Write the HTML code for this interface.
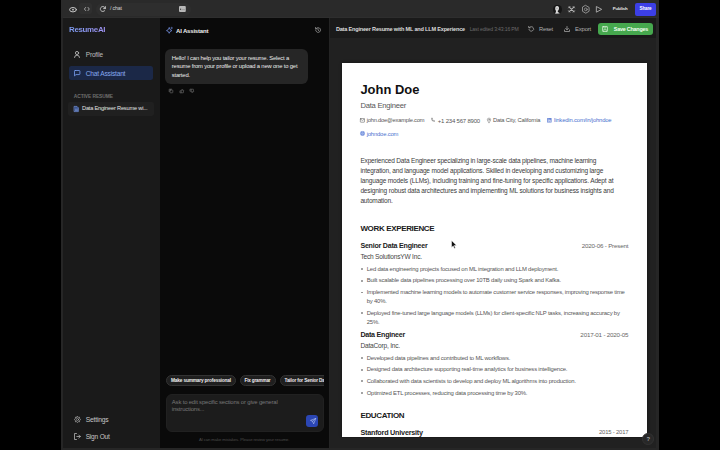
<!DOCTYPE html>
<html><head><meta charset="utf-8">
<style>
*{margin:0;padding:0;box-sizing:border-box}
html,body{width:720px;height:450px;overflow:hidden;background:#000;font-family:"Liberation Sans",sans-serif}
.b{position:absolute}
.t{position:absolute;white-space:nowrap;line-height:1}
svg{position:absolute;overflow:visible;fill:none;stroke-linecap:round;stroke-linejoin:round}
</style></head><body>
<!-- window frame -->
<div class="b" style="left:60.7px;top:0;width:598.1px;height:450px;background:#262626"></div>
<!-- top bar -->
<div class="b" style="left:60.7px;top:0;width:598.1px;height:18.2px;background:#2a2a2a"></div>
<div class="b" style="left:62.5px;top:17.2px;width:594px;height:1px;background:#2e2e2e"></div>
<!-- sidebar -->
<div class="b" style="left:63px;top:18.2px;width:97px;height:429.8px;background:#1a1a1a"></div>
<!-- chat -->
<div class="b" style="left:160px;top:18.2px;width:168.5px;height:429.8px;background:#0a0a0a"></div>
<div class="b" style="left:328.5px;top:18.2px;width:1.5px;height:429.8px;background:#242424"></div>
<!-- resume -->
<div class="b" style="left:330px;top:18.2px;width:326.2px;height:429.8px;background:#212121"></div>
<div class="b" style="left:330px;top:18.2px;width:326.2px;height:19.4px;background:#1a1a1a"></div>
<!-- paper -->
<div class="b" style="left:341.7px;top:63.3px;width:305px;height:374.2px;background:#fff;box-shadow:0 0 3px rgba(0,0,0,.45)"></div>

<!-- ===== TOP BAR ===== -->
<svg style="left:68.7px;top:6.6px" width="8" height="5.4" viewBox="0 0 8 5.4"><ellipse cx="4" cy="2.7" rx="3.4" ry="2.2" stroke="#c4c4c4" stroke-width="1"></ellipse><circle cx="4" cy="2.7" r="0.9" fill="#c4c4c4"></circle></svg>
<div class="b" style="left:79.3px;top:3.1px;width:12.5px;height:11.3px;background:#2f2f2f;border-radius:2px"></div>
<svg style="left:83.6px;top:6.9px" width="5.7" height="4" viewBox="0 0 5.7 4"><path d="M1.7 0.4 L0.4 2 L1.7 3.6 M4 0.4 L5.3 2 L4 3.6" stroke="#b4b4b4" stroke-width="0.85"></path></svg>
<div class="b" style="left:96px;top:2.5px;width:95px;height:13.5px;background:#2e2e2e;border-radius:7px"></div>
<svg style="left:100px;top:6px" width="6" height="6" viewBox="0 0 6 6"><path d="M5.3 2.5 A2.5 2.5 0 1 0 4.8 4.6" stroke="#c8c8c8" stroke-width="0.9"></path><path d="M5.4 0.6 L5.4 2.6 L3.6 2.6" stroke="#c8c8c8" stroke-width="0.9"></path></svg>
<div class="t" style="left: 110px; top: 6.32px; font-size: 5.14px; color: rgb(216, 216, 216); letter-spacing: -0.135px;">/ chat</div>
<svg style="left:179.2px;top:6px" width="6.8" height="6" viewBox="0 0 6.8 6"><rect x="0" y="0" width="6.8" height="6" rx="1" fill="#b8b8b8"></rect><rect x="1.2" y="2.6" width="0.9" height="1.4" fill="#333"></rect><path d="M3 3.6 H5.6" stroke="#8a8a8a" stroke-width="0.6"></path></svg>

<!-- avatar -->
<div class="b" style="left:553.4px;top:4.6px;width:8.4px;height:9.6px;border-radius:50%;background:#151515"></div>
<svg style="left:553.4px;top:4.6px" width="8.4" height="9.6" viewBox="0 0 8.4 9.6"><path d="M3 1.3 Q5.2 0.6 5.9 2.3 Q6.3 3.6 5.7 4.8 Q5.3 5.8 4.6 6 L5.2 7.2 Q6.4 7.6 6.8 8.6 L2.2 8.8 Q2.2 7.6 3 7 L2.8 5.6 Q2 4.6 2.2 3.2 Q2.3 1.8 3 1.3Z" fill="#d8d8d8"></path><path d="M3.4 3.2 Q4.2 2.8 5 3.4" stroke="#777" stroke-width="0.4"></path></svg>
<svg style="left:568.4px;top:5.8px" width="7.1" height="6.7" viewBox="0 0 7.1 6.7"><path d="M1 0.9 L6.1 5.8 M6.1 0.9 L1 5.8" stroke="#b0b0b0" stroke-width="1.1"></path><path d="M0.6 1.9 L1.9 0.6 M5.2 0.6 L6.5 1.9 M0.6 4.8 L1.9 6.1 M5.2 6.1 L6.5 4.8" stroke="#b0b0b0" stroke-width="0.9"></path></svg>
<svg style="left:581.7px;top:4.6px" width="7.6" height="8.7" viewBox="0 0 7.6 8.7"><path d="M3.8 0.5 L7.1 2.4 L7.1 6.3 L3.8 8.2 L0.5 6.3 L0.5 2.4Z" stroke="#a0a0a0" stroke-width="0.85"></path><circle cx="3.8" cy="4.35" r="1.4" stroke="#a0a0a0" stroke-width="0.75"></circle></svg>
<svg style="left:596.3px;top:5.8px" width="6.3" height="6.7" viewBox="0 0 6.3 6.7"><path d="M0.7 0.7 L5.7 3.35 L0.7 6Z" stroke="#b0b0b0" stroke-width="0.9"></path></svg>
<div class="t" style="left: 612.8px; top: 6.56px; font-size: 4.35px; font-weight: 700; color: rgb(230, 230, 230); letter-spacing: -0.145px;">Publish</div>
<div class="b" style="left:634.6px;top:2.8px;width:21.5px;height:12.9px;background:#3c3fe6;border-radius:2px"></div>
<div class="t" style="left: 639.5px; top: 6.55px; font-size: 4.6px; font-weight: 700; color: rgb(255, 255, 255); letter-spacing: -0.166px;">Share</div>

<!-- ===== SIDEBAR ===== -->
<div class="t" style="left: 69px; top: 26.26px; font-size: 7.94px; font-weight: 700; background: linear-gradient(90deg, rgb(126, 158, 244), rgb(161, 147, 244)) text; color: transparent; letter-spacing: -0.324px;">ResumeAI</div>
<svg style="left:74px;top:51.3px" width="6" height="7" viewBox="0 0 6 7"><circle cx="3" cy="2" r="1.6" stroke="#c4c4c4" stroke-width="0.8"></circle><path d="M0.5 6.5 Q0.5 4.2 3 4.2 Q5.5 4.2 5.5 6.5" stroke="#c4c4c4" stroke-width="0.8"></path></svg>
<div class="t" style="left: 85.8px; top: 52.14px; font-size: 6.49px; color: rgb(189, 189, 189); letter-spacing: -0.172px;">Profile</div>
<div class="b" style="left:69.3px;top:65.6px;width:83.7px;height:14.6px;background:#1b2847;border-radius:2.5px"></div>
<svg style="left:73.8px;top:69.8px" width="6.4" height="6.4" viewBox="0 0 6.4 6.4"><path d="M1.2 0.5 H5.2 Q5.9 0.5 5.9 1.2 V3.9 Q5.9 4.6 5.2 4.6 H2 L0.5 5.9 V1.2 Q0.5 0.5 1.2 0.5Z" stroke="#7aa0f2" stroke-width="0.8"></path></svg>
<div class="t" style="left: 85.8px; top: 70.83px; font-size: 6.61px; color: rgb(134, 168, 240); letter-spacing: -0.2px;">Chat Assistant</div>
<div class="t" style="left: 73.8px; top: 94.53px; font-size: 4.92px; font-weight: 700; color: rgb(111, 111, 111); letter-spacing: -0.098px;">ACTIVE RESUME</div>
<div class="b" style="left:68px;top:102px;width:85.5px;height:13.5px;background:#202020;border-radius:2.5px"></div>
<svg style="left:74px;top:105.9px" width="4.8" height="6" viewBox="0 0 4.8 6"><path d="M0.4 0.4 H3 L4.4 1.8 V5.6 H0.4Z" fill="#3b5590" stroke="#7c9ce8" stroke-width="0.6"></path><path d="M1.3 3.2 H3.4 M1.3 4.4 H3.4" stroke="#9fb6ee" stroke-width="0.45"></path></svg>
<div class="t" style="left: 82px; top: 106.39px; font-size: 5.63px; color: rgb(228, 228, 228); letter-spacing: -0.18px;">Data Engineer Resume wi...</div>

<svg style="left:73.7px;top:416.2px" width="7" height="7" viewBox="0 0 7 7"><path d="M3.5 0.5 L4.3 1.3 L5.5 1.2 L5.6 2.4 L6.5 3.5 L5.6 4.6 L5.5 5.8 L4.3 5.7 L3.5 6.5 L2.7 5.7 L1.5 5.8 L1.4 4.6 L0.5 3.5 L1.4 2.4 L1.5 1.2 L2.7 1.3Z" stroke="#a8a8a8" stroke-width="0.75"></path><circle cx="3.5" cy="3.5" r="1.1" stroke="#a8a8a8" stroke-width="0.7"></circle></svg>
<div class="t" style="left: 85.7px; top: 416.83px; font-size: 6.74px; color: rgb(198, 198, 198); letter-spacing: -0.197px;">Settings</div>
<svg style="left:73.5px;top:432.8px" width="7" height="7" viewBox="0 0 7 7"><path d="M2.5 0.5 H0.5 V6.5 H2.5 M2.8 3.5 H6.3 M4.8 2 L6.3 3.5 L4.8 5" stroke="#b4b4b4" stroke-width="0.8"></path></svg>
<div class="t" style="left: 85.7px; top: 433.53px; font-size: 6.6px; color: rgb(198, 198, 198); letter-spacing: -0.213px;">Sign Out</div>

<!-- ===== CHAT ===== -->
<svg style="left:165.6px;top:26.8px" width="7" height="6.6" viewBox="0 0 7 6.6"><path d="M3.2 0.9 Q3.6 3 5.9 3.6 Q3.6 4.1 3.2 6.3 Q2.8 4.1 0.5 3.6 Q2.8 3 3.2 0.9Z" stroke="#7a98ee" stroke-width="0.75"></path><path d="M5.7 0.2 V1.8 M4.9 1 H6.5" stroke="#7a98ee" stroke-width="0.5"></path></svg>
<div class="t" style="left: 176px; top: 27.87px; font-size: 6.03px; font-weight: 700; color: rgb(240, 240, 240); letter-spacing: -0.186px;">AI Assistant</div>
<svg style="left:314.5px;top:27px" width="6" height="6" viewBox="0 0 6 6"><path d="M0.7 3 A2.4 2.4 0 1 0 1.4 1.3" stroke="#aaa" stroke-width="0.7"></path><path d="M0.5 0.5 V1.8 H1.8 M3 1.7 V3 L3.9 3.8" stroke="#aaa" stroke-width="0.7"></path></svg>
<div class="b" style="left:165.2px;top:48.8px;width:143.1px;height:35.4px;background:#262626;border-radius:6px"></div>
<div class="b" style="left: 171.8px; top: 54.07px; width: 130px; white-space: nowrap; font-size: 5.85px; line-height: 8.4px; color: rgb(236, 236, 236); letter-spacing: -0.169px;">Hello! I can help you tailor your resume. Select a<br>resume from your profile or upload a new one to get<br>started.</div>
<svg style="left:169px;top:88.8px" width="4" height="4" viewBox="0 0 4 4"><rect x="1" y="1" width="2.8" height="2.8" rx="0.5" stroke="#777" stroke-width="0.6"></rect><path d="M0.2 2.6 V0.2 H2.6" stroke="#777" stroke-width="0.6"></path></svg>
<svg style="left:179.5px;top:88.8px" width="4" height="4" viewBox="0 0 4 4"><path d="M0.3 1.8 H1.2 V3.8 H0.3Z M1.2 1.8 L2 0.2 Q2.6 0.3 2.4 1.3 H3.7 L3.3 3.8 H1.2" stroke="#777" stroke-width="0.55"></path></svg>
<svg style="left:190px;top:88.8px" width="4" height="4" viewBox="0 0 4 4"><path d="M0.3 2.2 H1.2 V0.2 H0.3Z M1.2 2.2 L2 3.8 Q2.6 3.7 2.4 2.7 H3.7 L3.3 0.2 H1.2" stroke="#777" stroke-width="0.55"></path></svg>

<!-- chips -->
<div class="b" style="left:160px;top:370px;width:163.6px;height:20px;overflow:hidden">
  <div class="b" style="left:5.9px;top:5px;width:70px;height:11.4px;background:#1f1f1f;border:0.8px solid #333;border-radius:6px"></div>
  <div class="t" style="left: 11px; top: 9.24px; font-size: 4.77px; font-weight: 700; color: rgb(240, 240, 240); letter-spacing: -0.168px;">Make summary professional</div>
  <div class="b" style="left:79.8px;top:5px;width:36px;height:11.4px;background:#1f1f1f;border:0.8px solid #333;border-radius:6px"></div>
  <div class="t" style="left: 84.5px; top: 9.24px; font-size: 4.63px; font-weight: 700; color: rgb(240, 240, 240); letter-spacing: -0.162px;">Fix grammar</div>
  <div class="b" style="left:120px;top:5px;width:60px;height:11.4px;background:#1f1f1f;border:0.8px solid #333;border-radius:6px"></div>
  <div class="t" style="left: 124.5px; top: 9.24px; font-size: 4.71px; font-weight: 700; color: rgb(240, 240, 240); letter-spacing: -0.148px;">Tailor for Senior Data Engineer</div>
</div>
<div class="b" style="left:165.9px;top:393.8px;width:157.7px;height:38px;background:#1c1c1c;border:0.6px solid #212121;border-radius:6px"></div>
<div class="b" style="left: 171.8px; top: 398.67px; width: 140px; white-space: nowrap; font-size: 5.93px; line-height: 7.6px; color: rgb(119, 119, 119); letter-spacing: -0.166px;">Ask to edit specific sections or give general<br>instructions...</div>
<div class="b" style="left:306.4px;top:414.8px;width:11.9px;height:12px;background:#2b46b4;border-radius:3px"></div>
<svg style="left:309.5px;top:418.3px" width="6" height="6" viewBox="0 0 6 6"><path d="M5.5 0.5 L0.5 2.4 L2.6 3.3 L3.5 5.5Z M5.5 0.5 L2.6 3.3" stroke="#b8c8f0" stroke-width="0.6"></path></svg>
<div class="t" style="left: 199px; top: 437.76px; font-size: 4.27px; color: rgb(74, 74, 74); letter-spacing: -0.133px;">AI can make mistakes. Please review your resume.</div>

<!-- ===== RESUME HEADER ===== -->
<div class="t" style="left: 335.9px; top: 26.79px; font-size: 5.55px; font-weight: 700; color: rgb(220, 220, 220); letter-spacing: -0.19px;">Data Engineer Resume with ML and LLM Experience</div>
<div class="t" style="left: 469.7px; top: 27.12px; font-size: 5.11px; color: rgb(106, 106, 106); letter-spacing: -0.161px;">Last edited 3:43:16 PM</div>
<svg style="left:527.5px;top:25.8px" width="6" height="6" viewBox="0 0 6 6"><path d="M1 3.5 A2.3 2.3 0 1 0 1.5 1.4" stroke="#aaa" stroke-width="0.75"></path><path d="M0.7 0.4 V1.8 H2.1" stroke="#aaa" stroke-width="0.75"></path></svg>
<div class="t" style="left: 539px; top: 26.88px; font-size: 5.74px; color: rgb(176, 176, 176); letter-spacing: -0.194px;">Reset</div>
<svg style="left:563.5px;top:25.8px" width="6" height="6" viewBox="0 0 6 6"><path d="M3 0.5 V3.7 M1.6 2.4 L3 3.8 L4.4 2.4 M0.5 4 V5.5 H5.5 V4" stroke="#aaa" stroke-width="0.75"></path></svg>
<div class="t" style="left: 575px; top: 26.87px; font-size: 5.93px; color: rgb(176, 176, 176); letter-spacing: -0.188px;">Export</div>
<div class="b" style="left:598.2px;top:22.6px;width:54.4px;height:12.4px;background:#46a84e;border-radius:3px"></div>
<svg style="left:602.2px;top:26px" width="6" height="6" viewBox="0 0 6 6"><rect x="0.5" y="0.5" width="5" height="5" rx="0.6" stroke="#d8f0d8" stroke-width="0.7"></rect><path d="M1.8 0.5 V2 H4 V0.5 M1.7 5.5 V3.6 H4.3 V5.5" stroke="#d8f0d8" stroke-width="0.6"></path></svg>
<div class="t" style="left: 613.8px; top: 26.7px; font-size: 5.38px; font-weight: 700; color: rgb(242, 255, 242); letter-spacing: -0.204px;">Save Changes</div>

<!-- ===== PAPER ===== -->
<div class="t" style="left:360.4px;top:84px;font-size:12.95px;font-weight:700;color:#111">John Doe</div>
<div class="t" style="left: 360.4px; top: 101.98px; font-size: 7.66px; color: rgb(85, 85, 85); letter-spacing: -0.245px;">Data Engineer</div>
<svg style="left:360.2px;top:118.2px" width="4.8" height="4.8" viewBox="0 0 4.8 4.8"><rect x="0.35" y="0.6" width="4.1" height="3.6" rx="0.4" stroke="#666" stroke-width="0.6"></rect><path d="M0.4 1 L2.4 2.5 L4.4 1" stroke="#666" stroke-width="0.55"></path></svg>
<div class="t" style="left: 366.7px; top: 118.08px; font-size: 5.71px; color: rgb(85, 85, 85); letter-spacing: -0.202px;">john.doe@example.com</div>
<svg style="left:431px;top:118px" width="4" height="4" viewBox="0 0 4 4"><path d="M0.5 0.5 Q0.3 3.5 3.5 3.5 L3.5 2.6 L2.6 2.3 L2.2 2.8 Q1.2 2.3 1 1.5 L1.5 1.1 L1.3 0.3Z" stroke="#666" stroke-width="0.5"></path></svg>
<div class="t" style="left: 437.8px; top: 118.07px; font-size: 5.99px; color: rgb(85, 85, 85); letter-spacing: -0.196px;">+1 234 567 8900</div>
<svg style="left:486.5px;top:117.8px" width="4" height="5" viewBox="0 0 4 5"><path d="M2 4.6 Q0.3 2.8 0.3 1.8 A1.7 1.7 0 0 1 3.7 1.8 Q3.7 2.8 2 4.6Z" stroke="#666" stroke-width="0.5"></path><circle cx="2" cy="1.8" r="0.6" stroke="#666" stroke-width="0.45"></circle></svg>
<div class="t" style="left: 492.9px; top: 118.08px; font-size: 5.77px; color: rgb(85, 85, 85); letter-spacing: -0.164px;">Data City, California</div>
<svg style="left:547.2px;top:118.1px" width="4.6" height="4.6" viewBox="0 0 4.6 4.6"><rect x="0" y="0" width="4.6" height="4.6" rx="0.6" fill="#6a88d8"></rect><path d="M1.1 2 V3.7 M1.1 1 V1.1 M2.1 3.7 V2 M2.1 2.7 Q2.1 2 2.9 2 Q3.6 2 3.6 2.7 V3.7" stroke="#fff" stroke-width="0.55"></path></svg>
<div class="t" style="left: 554px; top: 118.37px; font-size: 5.9px; color: rgb(74, 114, 208); letter-spacing: -0.178px;">linkedin.com/in/johndoe</div>
<svg style="left:360px;top:131.2px" width="5" height="5" viewBox="0 0 5 5"><circle cx="2.5" cy="2.5" r="2.4" fill="#7390dc"></circle><path d="M0.3 2.5 H4.7 M2.5 0.2 Q1.3 2.5 2.5 4.8 Q3.7 2.5 2.5 0.2" stroke="#b8c8f0" stroke-width="0.4"></path></svg>
<div class="t" style="left: 366.7px; top: 132.27px; font-size: 5.89px; color: rgb(74, 114, 208); letter-spacing: -0.196px;">johndoe.com</div>

<div class="b" style="left: 360.4px; top: 155.65px; width: 270px; white-space: nowrap; font-size: 6.54px; line-height: 10.1px; color: rgb(58, 58, 58); letter-spacing: -0.183px; --ls: -0.183px;">Experienced Data Engineer specializing in large-scale data pipelines, machine learning<br><span style="letter-spacing:calc(var(--ls) + 0.011px)">integration, and language model applications. Skilled in developing and customizing large</span><br><span style="letter-spacing:calc(var(--ls) + 0.039px)">language models (LLMs), including training and fine-tuning for specific applications. Adept at</span><br><span style="letter-spacing:calc(var(--ls) + 0.032px)">designing robust data architectures and implementing ML solutions for business insights and</span><br>automation.</div>

<div class="t" style="left: 360.4px; top: 224.76px; font-size: 8px; font-weight: 700; color: rgb(26, 26, 26); letter-spacing: -0.35px;">WORK EXPERIENCE</div>
<div class="t" style="left: 360.4px; top: 242.91px; font-size: 7.12px; font-weight: 700; color: rgb(34, 34, 34); letter-spacing: -0.237px;">Senior Data Engineer</div>
<div class="t" style="right: 91.7px; top: 242.85px; font-size: 6.24px; color: rgb(102, 102, 102); letter-spacing: -0.191px;">2020-06 - Present</div>
<div class="t" style="left: 360.4px; top: 253.94px; font-size: 6.58px; color: rgb(68, 68, 68); letter-spacing: -0.208px;">Tech SolutionsYW Inc.</div>

<style>
.ul{position:absolute;white-space:nowrap;left:360.4px;width:268px;font-size:5.51px;line-height:9.1px;color:#555}
.ul div{position:relative;padding-left:6.3px;margin-bottom:2.5px}
.ul div::before{content:"";position:absolute;left:1px;top:3.5px;width:1.8px;height:1.8px;border-radius:50%;background:#8a8a8a}
</style>
<div class="ul" style="top:264.9px">
 <div style="font-size: 5.9px; letter-spacing: -0.181px;">Led data engineering projects focused on ML integration and LLM deployment.</div>
 <div style="font-size: 5.9px; letter-spacing: -0.174px;">Built scalable data pipelines processing over 10TB daily using Spark and Kafka.</div>
 <div style="font-size: 5.9px; letter-spacing: -0.185px;">Implemented machine learning models to automate customer service responses, improving response time<br>by 40%.</div>
 <div style="font-size: 5.9px; letter-spacing: -0.176px;">Deployed fine-tuned large language models (LLMs) for client-specific NLP tasks, increasing accuracy by<br>25%.</div>
</div>
<div class="t" style="left: 360.4px; top: 332.41px; font-size: 7.12px; font-weight: 700; color: rgb(34, 34, 34); letter-spacing: -0.243px;">Data Engineer</div>
<div class="t" style="right: 91.7px; top: 331.65px; font-size: 6.24px; color: rgb(102, 102, 102); letter-spacing: -0.197px;">2017-01 - 2020-05</div>
<div class="t" style="left: 360.4px; top: 343.34px; font-size: 6.58px; color: rgb(68, 68, 68); letter-spacing: -0.202px;">DataCorp, Inc.</div>
<div class="ul" style="top:353.8px">
 <div style="font-size: 5.9px; letter-spacing: -0.179px;">Developed data pipelines and contributed to ML workflows.</div>
 <div style="font-size: 5.9px; letter-spacing: -0.169px;">Designed data architecture supporting real-time analytics for business intelligence.</div>
 <div style="font-size: 5.9px; letter-spacing: -0.173px;">Collaborated with data scientists to develop and deploy ML algorithms into production.</div>
 <div style="font-size: 5.9px; letter-spacing: -0.184px;">Optimized ETL processes, reducing data processing time by 30%.</div>
</div>
<div class="t" style="left: 360.4px; top: 411.56px; font-size: 8px; font-weight: 700; color: rgb(26, 26, 26); letter-spacing: -0.347px;">EDUCATION</div>
<div class="t" style="left: 360.4px; top: 429.2px; font-size: 7.25px; font-weight: 700; color: rgb(34, 34, 34); letter-spacing: -0.234px;">Stanford University</div>
<div class="t" style="right: 91.7px; top: 429.87px; font-size: 5.9px; color: rgb(102, 102, 102); letter-spacing: -0.19px;">2015 - 2017</div>
<!-- bottom strip covering paper overflow -->
<div class="b" style="left:330px;top:437.5px;width:326.2px;height:10.5px;background:#212121"></div>
<!-- help button -->
<div class="b" style="left:642.1px;top:433.2px;width:11.8px;height:11.8px;border-radius:50%;background:#282828;border:0.6px solid #323232"></div>
<div class="t" style="left: 646.6px; top: 437.17px; font-size: 5.89px; font-weight: 700; color: rgb(170, 170, 170); letter-spacing: -0.219px;">?</div>
<!-- cursor -->
<svg style="left:451px;top:240px" width="6" height="9" viewBox="0 0 6 9"><path d="M0.5 0.5 L0.5 7.5 L2.2 5.9 L3.4 8.5 L4.4 8 L3.3 5.5 L5.5 5.4Z" fill="#111" stroke="#fff" stroke-width="0.5"></path></svg>

</body></html>
